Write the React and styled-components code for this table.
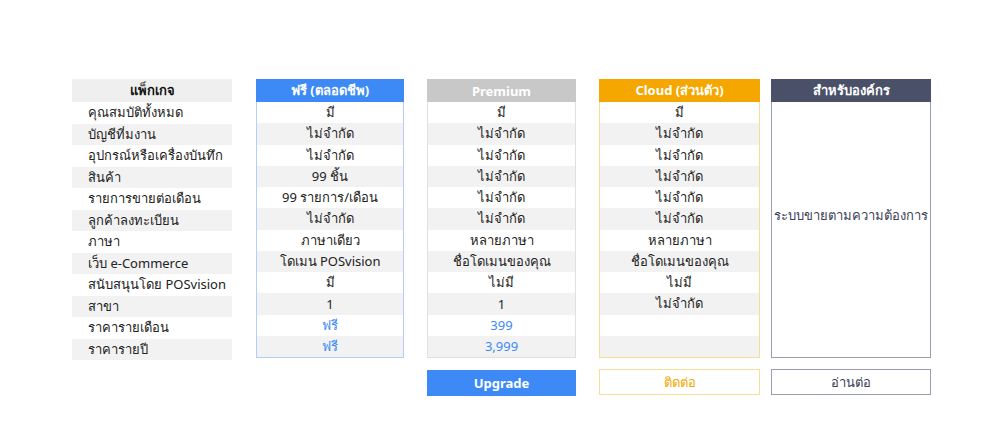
import React from "react";
import styled, { createGlobalStyle } from "styled-components";

const GlobalStyle = createGlobalStyle`
  html, body {
    margin: 0;
    padding: 0;
    background: #ffffff;
    font-family: "Noto Sans", "Open Sans", sans-serif;
    color: #222222;
  }
`;

const Page = styled.div`
  width: 1000px;
  height: 447px;
  box-sizing: border-box;
  padding: 79px 0 0 72px;
  display: flex;
  align-items: flex-start;
`;

const Column = styled.div`
  width: ${(p) => p.$width}px;
  margin-left: ${(p) => p.$gap || 0}px;
  display: flex;
  flex-direction: column;
`;

const Table = styled.div`
  display: flex;
  flex-direction: column;
  border: ${(p) => (p.$border ? `1px solid ${p.$border}` : "none")};
  border-top: none;
  box-sizing: border-box;
`;

const Header = styled.div`
  height: 23px;
  background: ${(p) => p.$bg};
  color: ${(p) => p.$color || "#ffffff"};
  font-size: 13px;
  font-weight: 700;
  display: flex;
  align-items: center;
  justify-content: center;
  margin: ${(p) => (p.$outset ? "0 -1px" : "0")};
`;

const Row = styled.div`
  height: ${(p) => p.$h || 21.25}px;
  background: ${(p) => (p.$odd ? "#f2f2f2" : "#ffffff")};
  font-size: 13px;
  display: flex;
  align-items: center;
  justify-content: ${(p) => (p.$left ? "flex-start" : "center")};
  padding-left: ${(p) => (p.$left ? "16px" : "0")};
  color: ${(p) => p.$color || "#222222"};
  white-space: nowrap;
`;

const Custom = styled.div`
  height: 255px;
  box-sizing: border-box;
  padding-bottom: 28px;
  display: flex;
  align-items: center;
  justify-content: center;
  font-size: 13px;
  color: #3b4058;
`;

const Button = styled.div`
  margin-top: ${(p) => p.$top || 11}px;
  height: 26px;
  box-sizing: border-box;
  display: flex;
  align-items: center;
  justify-content: center;
  font-size: 13px;
  font-weight: ${(p) => (p.$solid ? 700 : 400)};
  background: ${(p) => (p.$solid ? p.$color : "#ffffff")};
  color: ${(p) => (p.$solid ? "#ffffff" : p.$color)};
  border: 1px solid ${(p) => p.$border || p.$color};
  cursor: pointer;
`;

const labels = [
  "คุณสมบัติทั้งหมด",
  "บัญชีที่มงาน",
  "อุปกรณ์หรือเครื่องบันทึก",
  "สินค้า",
  "รายการขายต่อเดือน",
  "ลูกค้าลงทะเบียน",
  "ภาษา",
  "เว็บ e-Commerce",
  "สนับสนุนโดย POSvision",
  "สาขา",
  "ราคารายเดือน",
  "ราคารายปี",
];

const free = [
  "มี",
  "ไม่จำกัด",
  "ไม่จำกัด",
  "99 ชิ้น",
  "99 รายการ/เดือน",
  "ไม่จำกัด",
  "ภาษาเดียว",
  "โดเมน POSvision",
  "มี",
  "1",
  "ฟรี",
  "ฟรี",
];

const premium = [
  "มี",
  "ไม่จำกัด",
  "ไม่จำกัด",
  "ไม่จำกัด",
  "ไม่จำกัด",
  "ไม่จำกัด",
  "หลายภาษา",
  "ชื่อโดเมนของคุณ",
  "ไม่มี",
  "1",
  "399",
  "3,999",
];

const cloud = [
  "มี",
  "ไม่จำกัด",
  "ไม่จำกัด",
  "ไม่จำกัด",
  "ไม่จำกัด",
  "ไม่จำกัด",
  "หลายภาษา",
  "ชื่อโดเมนของคุณ",
  "ไม่มี",
  "ไม่จำกัด",
  "",
  "",
];

const BLUE = "#3d8af7";

function Plan({ width, gap, title, bg, border, items, children }) {
  return (
    <Column $width={width} $gap={gap}>
      <Table $border={border}>
        <Header $bg={bg} $outset>
          {title}
        </Header>
        {items.map((v, i) => (
          <Row key={i} $odd={i % 2 === 1} $color={i >= 10 ? BLUE : undefined}>
            {v}
          </Row>
        ))}
      </Table>
      {children}
    </Column>
  );
}

export default function App() {
  return (
    <>
      <GlobalStyle />
      <Page>
        <Column $width={160}>
          <Header $bg="#efefef" $color="#111111">
            แพ็กเกจ
          </Header>
          {labels.map((l, i) => (
            <Row key={l} $left $h={21.5} $odd={i % 2 === 1}>
              {l}
            </Row>
          ))}
        </Column>

        <Plan width={148} gap={24} title="ฟรี (ตลอดชีพ)" bg={BLUE} border="#b3cff5" items={free} />

        <Plan width={149} gap={23} title="Premium" bg="#c8c8c8" border="#e0e0e0" items={premium}>
          <Button $solid $color={BLUE} $top={12}>
            Upgrade
          </Button>
        </Plan>

        <Plan width={161} gap={23} title="Cloud (ส่วนตัว)" bg="#f5a700" border="#f8dc9a" items={cloud}>
          <Button $color="#f5a700" $border="#f8dc9a">
            ติดต่อ
          </Button>
        </Plan>

        <Column $width={160} $gap={11}>
          <Table $border="#9a9eb0">
            <Header $bg="#4a5068" $outset>
              สำหรับองค์กร
            </Header>
            <Custom>ระบบขายตามความต้องการ</Custom>
          </Table>
          <Button $color="#3b4058" $border="#9a9eb0">
            อ่านต่อ
          </Button>
        </Column>
      </Page>
    </>
  );
}
